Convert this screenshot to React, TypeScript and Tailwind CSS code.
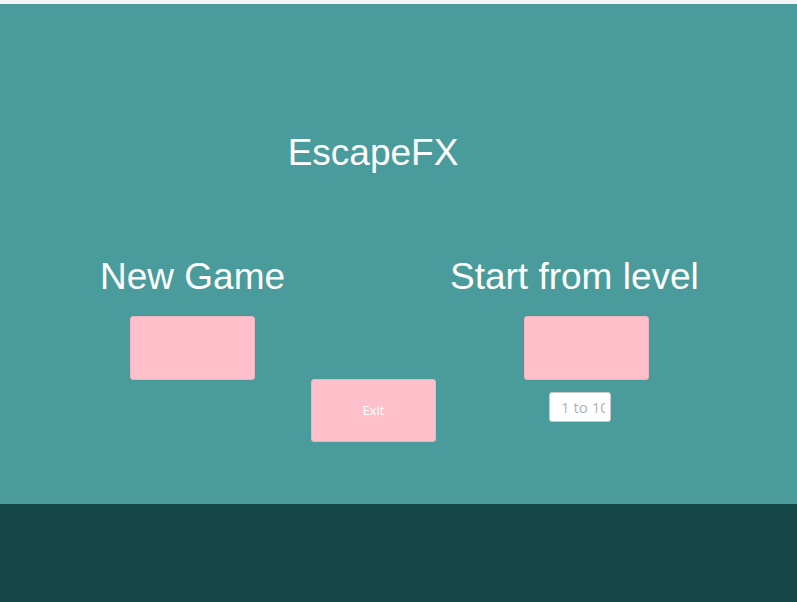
import React from "react";

export default function App() {
  const sans = { fontFamily: '"Liberation Sans", Arial, sans-serif' };
  return (
    <div className="w-[797px] h-[602px] flex flex-col overflow-hidden" style={sans}>
      <div className="h-[4px] bg-[#f4f4f4]" />
      <div className="h-[500px] bg-[#4a9c9c] flex flex-col">
        <div className="pt-[130px] w-[746px] text-center text-white text-[37px] leading-none">
          EscapeFX
        </div>
        <div className="mt-[87px] flex items-start">
          <div className="w-[311px] flex flex-col items-start">
            <div className="ml-[100px] text-white text-[37px] leading-none whitespace-nowrap">New Game</div>
            <button className="ml-[130px] mt-[21px] w-[125px] h-[64px] bg-[#ffc0cb] rounded-[3px] border border-[#f0b2bd]" />
          </div>
          <div className="w-[125px] mt-[121px]">
            <button
              className="w-[125px] h-[63px] bg-[#ffc0cb] rounded-[3px] border border-[#f0b2bd] text-white text-[13px]"
              style={{ fontFamily: '"Open Sans", sans-serif' }}
            >
              Exit
            </button>
          </div>
          <div className="flex flex-col items-start">
            <div className="ml-[14px] text-white text-[37px] leading-none whitespace-nowrap">Start from level</div>
            <button className="ml-[88px] mt-[21px] w-[125px] h-[64px] bg-[#ffc0cb] rounded-[3px] border border-[#f0b2bd]" />
            <input
              className="ml-[113px] mt-[12px] w-[62px] h-[30px] bg-white border border-[#c9c9c9] rounded-[3px] pl-[11px] pr-[5px] text-[15px] placeholder:text-[#b3b3b3] outline-none"
              style={{ fontFamily: '"Open Sans", sans-serif' }}
              placeholder="1 to 10"
            />
          </div>
        </div>
      </div>
      <div className="flex-1 bg-[#164749]" />
    </div>
  );
}
